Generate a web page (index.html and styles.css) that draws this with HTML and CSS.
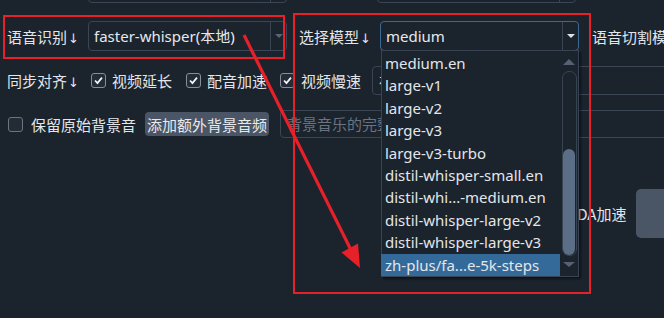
FILE: index.html
```html
<!DOCTYPE html>
<html>
<head>
<meta charset="utf-8">
<title>设置</title>
<link rel="stylesheet" href="styles.css">
</head>
<body>
<div class="page">

  <!-- 上一行，只露出底边 -->
  <div class="row row-top">
    <div class="combo"><span class="combo-text"></span><span class="combo-btn"></span></div>
    <div class="combo combo-top2"><span class="combo-text"></span><span class="combo-btn"></span></div>
  </div>

  <div class="row row-recog">
    <span class="label">语音识别<i class="arr">↓</i></span>
    <div class="combo">
      <span class="combo-text">faster-whisper(本地)</span>
      <span class="combo-btn"><b class="tri dim"></b></span>
    </div>
    <span class="label label-model">选择模型<i class="arr">↓</i></span>
    <div class="combo focus">
      <span class="combo-text">medium</span>
      <span class="combo-btn"><b class="tri"></b></span>
    </div>
    <span class="label label-cut">语音切割模式</span>
  </div>

  <div class="row row-align">
    <span class="label label-align">同步对齐<i class="arr">↓</i></span>
    <label class="check"><span class="cb on"><svg viewBox="0 0 15 15"><path d="M3.5 7.5 L6.3 10.5 L11.5 4.2"/></svg></span>视频延长</label>
    <label class="check"><span class="cb on"><svg viewBox="0 0 15 15"><path d="M3.5 7.5 L6.3 10.5 L11.5 4.2"/></svg></span>配音加速</label>
    <label class="check check-last"><span class="cb on"><svg viewBox="0 0 15 15"><path d="M3.5 7.5 L6.3 10.5 L11.5 4.2"/></svg></span>视频慢速</label>
    <div class="input">视频慢速倍数</div>
  </div>

  <div class="row row-bg">
    <label class="check check-keep"><span class="cb"></span>保留原始背景音</label>
    <button class="btn">添加额外背景音频</button>
    <div class="input placeholder">背景音乐的完整路径</div>
  </div>

  <div class="row row-cuda">
    <label class="check"><span class="cb"></span>CUDA加速</label>
    <button class="btn btn-big"></button>
  </div>

  <!-- 下拉列表 -->
  <div class="popup">
    <ul class="items">
      <li>medium.en</li>
      <li>large-v1</li>
      <li>large-v2</li>
      <li>large-v3</li>
      <li>large-v3-turbo</li>
      <li>distil-whisper-small.en</li>
      <li>distil-whi...-medium.en</li>
      <li>distil-whisper-large-v2</li>
      <li>distil-whisper-large-v3</li>
      <li class="sel">zh-plus/fa...e-5k-steps</li>
    </ul>
    <div class="scroll">
      <b class="sc-up"></b>
      <div class="track"><div class="handle"></div></div>
      <b class="sc-down"></b>
    </div>
  </div>

  <!-- 红色标注 -->
  <svg class="marks" width="664" height="318" viewBox="0 0 664 318">
    <rect x="4" y="16" width="280" height="42"/>
    <rect x="294" y="14" width="296" height="279"/>
    <line x1="244" y1="35" x2="351" y2="250"/>
    <polygon points="360,268 341.5,252.5 358,243.5"/>
  </svg>

</div>
</body>
</html>
```

FILE: styles.css
```css
html, body {
  margin: 0;
  padding: 0;
  background: #1b232d;
  overflow: hidden;
}
body {
  font-family: "Noto Sans CJK SC", sans-serif;
  font-size: 15px;
  color: #e3e6ea;
}
.page {
  position: relative;
  width: 664px;
  height: 318px;
  padding-left: 7px;
  box-sizing: border-box;
  overflow: hidden;
}
.row {
  display: flex;
  align-items: center;
  white-space: nowrap;
}
.row-top {
  height: 30px;
  margin-top: -27px;
  padding-left: 81px;
}
.row-top .combo-top2 { margin-left: 90px; }
.row-recog { height: 30px; margin-top: 18px; }
.row-align { height: 29px; margin-top: 15px; }
.row-bg { height: 28px; margin-top: 15px; }
.row-cuda { height: 49px; margin-top: 51px; padding-left: 529px; }

.label { width: 81px; flex: none; }
.label-model { margin-left: 12px; }
.label-cut { margin-left: 13px; }
.label-align { width: 84px; }
.arr {
  font-style: normal;
  font-family: "DejaVu Sans", sans-serif;
  font-size: 13px;
  margin-left: 1px;
}

/* 下拉框 */
.combo {
  display: flex;
  width: 199px;
  height: 30px;
  box-sizing: border-box;
  border: 1px solid #3a4555;
  border-radius: 4px;
  flex: none;
}
.combo.focus { border-color: #3c6894; }
.combo-text {
  flex: 1;
  padding-left: 5px;
  line-height: 28px;
  font-family: "Noto Sans", "Noto Sans CJK SC", sans-serif;
  color: #e6e9ec;
}
.combo-btn {
  width: 15px;
  border-left: 1px solid #3a4555;
  display: flex;
  align-items: center;
  justify-content: center;
}
.tri {
  width: 0;
  height: 0;
  border-left: 4px solid transparent;
  border-right: 4px solid transparent;
  border-top: 4px solid #dfe3e8;
}
.tri.dim { border-top-color: #596474; }

/* 复选框 */
.check {
  display: flex;
  align-items: center;
  gap: 6px;
  margin-right: 14px;
  flex: none;
}
.check-last { margin-left: -1px; margin-right: 11px; }
.check-keep { margin-left: 1px; gap: 8px; margin-right: 9px; }
.row-cuda .check { margin-right: 10px; }
.cb {
  width: 15px;
  height: 15px;
  box-sizing: border-box;
  border: 1px solid #6b7480;
  border-radius: 3px;
  background: #232b36;
}
.cb.on { border-color: #858e9a; }
.cb svg { display: block; width: 13px; height: 13px; }
.cb path {
  fill: none;
  stroke: #f2f4f6;
  stroke-width: 2;
}

.input {
  width: 420px;
  height: 29px;
  box-sizing: border-box;
  border: 1px solid #3a4555;
  border-radius: 4px;
  padding-left: 6px;
  line-height: 27px;
  flex: none;
  color: #dfe3e8;
}
.row-bg .input { height: 28px; line-height: 26px; }
.placeholder { color: #6a7380; }

.btn {
  font: inherit;
  color: #e8eaed;
  background: #4a5566;
  border: none;
  border-radius: 4px;
  height: 24px;
  width: 124px;
  padding: 0;
  margin-right: 11px;
  flex: none;
}
.btn-big {
  height: 49px;
  width: 110px;
  margin: 0;
  border-radius: 5px;
}

/* 弹出的列表 */
.popup {
  position: absolute;
  left: 381px;
  top: 50px;
  width: 198px;
  height: 227px;
  box-sizing: border-box;
  border: 1px solid #384353;
  background: #1b232d;
  box-shadow: 2px 2px 2px rgba(0, 0, 0, 0.45);
  display: flex;
}
.items {
  list-style: none;
  margin: 0;
  padding: 1px 0 0;
  width: 178px;
  font-family: "Noto Sans", "Noto Sans CJK SC", sans-serif;
}
.items li {
  height: 22.4px;
  line-height: 22.4px;
  padding-left: 4px;
  margin-left: -1px;
  color: #e3e6ea;
}
.items li.sel { background: #346a99; }
.scroll {
  width: 18px;
  display: flex;
  flex-direction: column;
  align-items: center;
}
.sc-up, .sc-down {
  width: 0;
  height: 0;
  border-left: 6px solid transparent;
  border-right: 6px solid transparent;
}
.sc-up { border-bottom: 6px solid #566173; margin-top: 8px; }
.sc-down { border-top: 5px solid #566173; margin-top: 6px; }
.track {
  width: 15px;
  height: 185px;
  margin-top: 6px;
  box-sizing: border-box;
  border: 1px solid #384352;
  border-radius: 7px;
  display: flex;
  flex-direction: column;
  align-items: center;
}
.handle {
  width: 12px;
  height: 106px;
  margin-top: 77px;
  border-radius: 6px;
  background: #5b6e86;
}

/* 标注 */
.marks {
  position: absolute;
  left: 0;
  top: 0;
  pointer-events: none;
}
.marks rect {
  fill: none;
  stroke: #e8202a;
  stroke-width: 2;
}
.marks line {
  stroke: #e8202a;
  stroke-width: 3.2;
}
.marks polygon { fill: #e8202a; }
```
